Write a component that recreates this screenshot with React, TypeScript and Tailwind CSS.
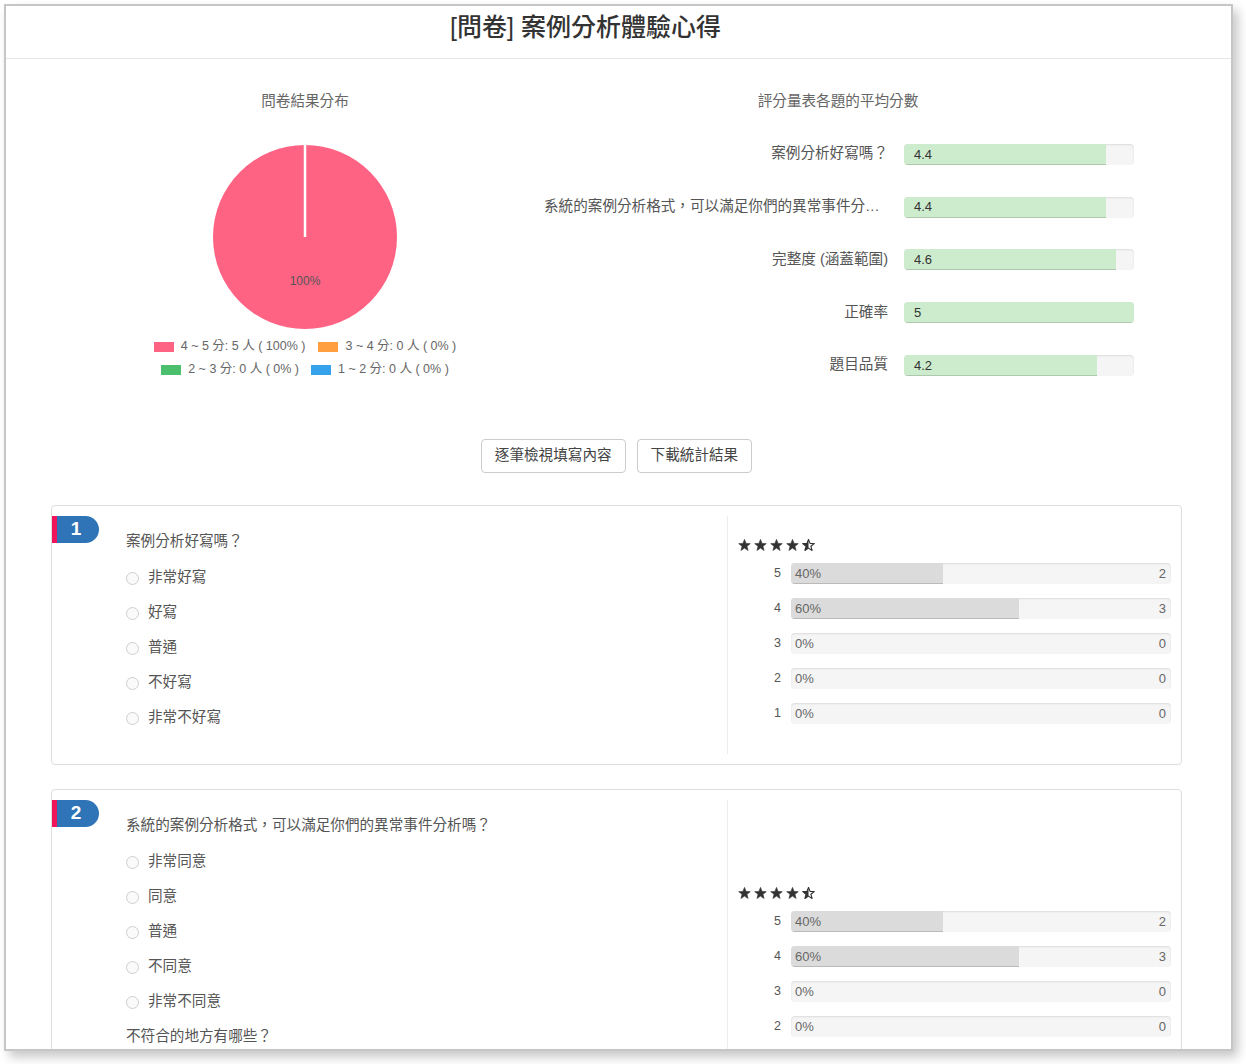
const FONT = '"Liberation Sans", "Noto Sans CJK TC", sans-serif'

const averages = [
  { label: '案例分析好寫嗎？', value: 4.4 },
  { label: '系統的案例分析格式，可以滿足你們的異常事件分析嗎？', value: 4.4 },
  { label: '完整度 (涵蓋範圍)', value: 4.6 },
  { label: '正確率', value: 5 },
  { label: '題目品質', value: 4.2 },
]

const dist = [
  { score: 5, pct: 40, count: 2 },
  { score: 4, pct: 60, count: 3 },
  { score: 3, pct: 0, count: 0 },
  { score: 2, pct: 0, count: 0 },
  { score: 1, pct: 0, count: 0 },
]

const STAR =
  'M8 0.5 L9.9 5.4 L15.1 5.7 L11 9 L12.4 14.1 L8 11.2 L3.6 14.1 L5 9 L0.9 5.7 L6.1 5.4 Z'

function Star({ half = false }: { half?: boolean }) {
  return (
    <svg width="13" height="13" viewBox="0 0 16 16" className="shrink-0">
      {half ? (
        <>
          <defs>
            <clipPath id="leftHalf">
              <rect x="0" y="0" width="8" height="16" />
            </clipPath>
          </defs>
          <path d={STAR} fill="none" stroke="#333" strokeWidth="1.4" strokeLinejoin="round" />
          <path d={STAR} fill="#333" clipPath="url(#leftHalf)" />
        </>
      ) : (
        <path d={STAR} fill="#333" stroke="#333" strokeWidth="0.8" strokeLinejoin="round" />
      )}
    </svg>
  )
}

function Stars() {
  return (
    <div className="flex items-center gap-[3px] h-[14px]">
      <Star />
      <Star />
      <Star />
      <Star />
      <Star half />
    </div>
  )
}

function Distribution({ rows }: { rows: typeof dist }) {
  return (
    <div className="flex flex-col gap-[14px] mt-[10px]">
      {rows.map((r) => (
        <div key={r.score} className="flex items-center">
          <div className="w-[53px] text-right pr-[10px] text-[12.5px] text-[#555]">{r.score}</div>
          <div className="relative flex-1 h-[21px] rounded-[4px] bg-[#f5f5f5] shadow-[inset_0_1px_2px_rgba(0,0,0,0.1)] overflow-hidden">
            <div
              className="h-full bg-[#dbdbdb] shadow-[inset_0_-1px_0_rgba(0,0,0,0.15)]"
              style={{ width: `${r.pct}%` }}
            />
            <div className="absolute inset-0 flex items-center justify-between pl-[4px] pr-[5px] text-[13px] text-[#666]">
              <span>{r.pct}%</span>
              <span>{r.count}</span>
            </div>
          </div>
        </div>
      ))}
    </div>
  )
}

function Radio({ label }: { label: string }) {
  return (
    <div className="h-[35px] flex items-center gap-[9px]">
      <span className="w-[13px] h-[13px] rounded-full border border-[#cfcfcf] bg-[#fafafa] shrink-0" />
      <span className="text-[14.6px] text-[#555]">{label}</span>
    </div>
  )
}

function Badge({ n }: { n: number }) {
  return (
    <div className="w-[47px] h-[27px] shrink-0 flex bg-[#2f74b6] rounded-r-[14px] overflow-hidden">
      <div className="w-[5px] h-full bg-[#f0145a]" />
      <div className="flex-1 flex items-center justify-center text-white font-bold text-[19px] pr-[4px]">
        {n}
      </div>
    </div>
  )
}

function QuestionCard({
  n,
  question,
  options,
  extra,
  rightPad,
}: {
  n: number
  question: string
  options: string[]
  extra?: React.ReactNode
  rightPad: string
}) {
  return (
    <div className="flex border border-[#dedede] rounded-[4px] py-[10px] bg-white">
      <div className="w-[675px] flex">
        <Badge n={n} />
        <div className="ml-[27px] pt-[15px] pb-[18px]">
          <div className="h-[20px] leading-[20px] text-[14.6px] text-[#555]">{question}</div>
          <div className="mt-[10px]">
            {options.map((o) => (
              <Radio key={o} label={o} />
            ))}
          </div>
          {extra}
        </div>
      </div>
      <div className={`flex-1 border-l border-[#ececec] pl-[10px] pr-[10px] ${rightPad}`}>
        <Stars />
        <Distribution rows={dist} />
      </div>
    </div>
  )
}

function Pie() {
  return (
    <svg width="190" height="190" viewBox="0 0 190 190" className="mt-[31px]">
      <circle cx="95" cy="95" r="92" fill="#ff6384" />
      <line x1="95" y1="95" x2="95" y2="2" stroke="#fff" strokeWidth="2.5" />
      <text x="95" y="143" textAnchor="middle" fontSize="12" fill="#555" fontFamily={FONT}>
        100%
      </text>
    </svg>
  )
}

function LegendItem({ color, text }: { color: string; text: string }) {
  return (
    <div className="flex items-center gap-[7px]">
      <span className="w-[20px] h-[10px]" style={{ background: color }} />
      <span className="text-[12.5px] text-[#666] whitespace-pre">{text}</span>
    </div>
  )
}

export default function App() {
  return (
    <div className="w-[1246px] h-[1064px] bg-white overflow-hidden" style={{ fontFamily: FONT }}>
      <div className="ml-[4px] mt-[4px] w-[1229px] h-[1047px] border-2 border-[#c6c6c6] bg-white overflow-hidden shadow-[5px_6px_10px_rgba(0,0,0,0.22)]">
        {/* header */}
        <div className="h-[53px] border-b border-[#e6e6e6] flex justify-center pt-[6px] pr-[66px]">
          <h1 className="text-[25px] leading-[30px] font-medium text-[#333]">[問卷] 案例分析體驗心得</h1>
        </div>

        <div className="pl-[45px] pr-[49px]">
          {/* charts */}
          <div className="flex mt-[32px]">
            <div className="ml-[54px] w-[400px] flex flex-col items-center">
              <div className="h-[20px] leading-[20px] text-[14.6px] text-[#666]">問卷結果分布</div>
              <Pie />
              <div className="mt-[3px] flex flex-col items-center">
                <div className="h-[23px] flex items-center gap-[13px]">
                  <LegendItem color="#ff6384" text="4 ~ 5 分: 5 人 ( 100% )" />
                  <LegendItem color="#ff9f40" text="3 ~ 4 分: 0 人 ( 0% )" />
                </div>
                <div className="h-[23px] flex items-center gap-[12px]">
                  <LegendItem color="#4bbf6b" text="2 ~ 3 分: 0 人 ( 0% )" />
                  <LegendItem color="#36a2eb" text="1 ~ 2 分: 0 人 ( 0% )" />
                </div>
              </div>
            </div>

            <div className="ml-[35px] w-[596px] flex flex-col">
              <div className="h-[20px] leading-[20px] text-center text-[14.6px] text-[#666]">
                評分量表各題的平均分數
              </div>
              <div className="mt-[17px]">
                {averages.map((a) => (
                  <div key={a.label} className="h-[52.75px] flex items-center">
                    <div className="w-[348px] pl-[4px] text-right truncate text-[14.6px] text-[#555]">
                      {a.label}
                    </div>
                    <div className="ml-[16px] w-[230px] h-[21px] rounded-[4px] bg-[#f5f5f5] shadow-[inset_0_1px_2px_rgba(0,0,0,0.1)] overflow-hidden relative">
                      <div
                        className="h-full bg-[#cdebcd] shadow-[inset_0_-1px_0_rgba(0,0,0,0.15)]"
                        style={{ width: `${(a.value / 5) * 100}%` }}
                      />
                      <span className="absolute left-[10px] top-0 h-full flex items-center text-[13px] text-[#333]">
                        {a.value}
                      </span>
                    </div>
                  </div>
                ))}
              </div>
            </div>
          </div>

          {/* actions */}
          <div className="flex justify-center gap-[11px] mt-[47px]">
            <button className="h-[34px] px-[13px] border border-[#ccc] rounded-[4px] bg-white text-[14.6px] text-[#444]">
              逐筆檢視填寫內容
            </button>
            <button className="h-[34px] px-[13px] border border-[#ccc] rounded-[4px] bg-white text-[14.6px] text-[#444]">
              下載統計結果
            </button>
          </div>

          {/* questions */}
          <div className="mt-[32px] flex flex-col gap-[24px]">
            <QuestionCard
              n={1}
              question="案例分析好寫嗎？"
              options={['非常好寫', '好寫', '普通', '不好寫', '非常不好寫']}
              rightPad="pt-[23px]"
            />
            <QuestionCard
              n={2}
              question="系統的案例分析格式，可以滿足你們的異常事件分析嗎？"
              options={['非常同意', '同意', '普通', '不同意', '非常不同意']}
              rightPad="pt-[87px]"
              extra={
                <>
                  <div className="mt-[6px] h-[20px] leading-[20px] text-[14.6px] text-[#555]">
                    不符合的地方有哪些？
                  </div>
                  <div className="mt-[10px] w-[560px] h-[80px] border border-[#ddd] rounded-[4px]" />
                </>
              }
            />
          </div>
        </div>
      </div>
    </div>
  )
}
